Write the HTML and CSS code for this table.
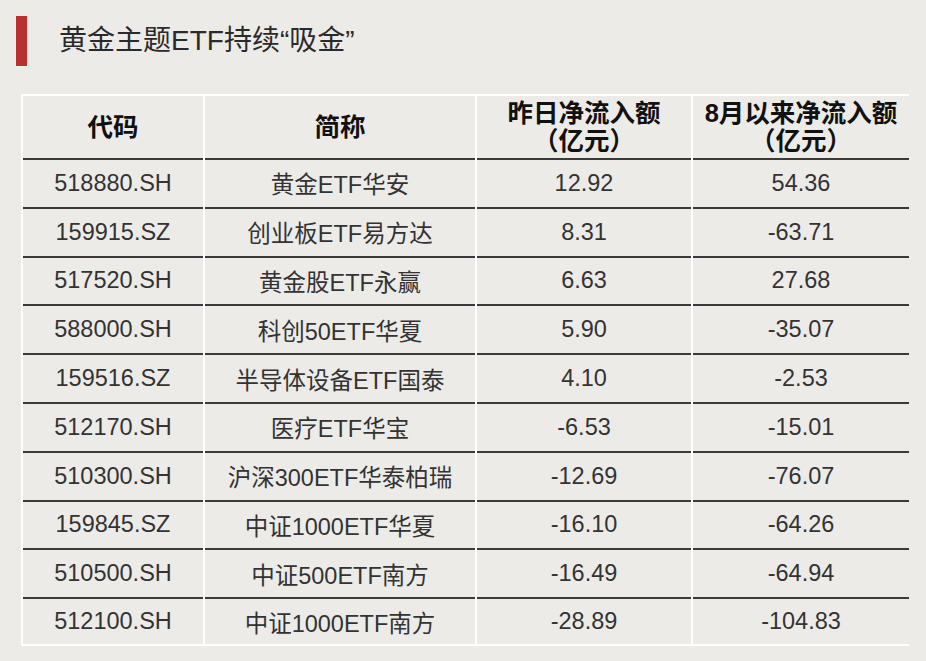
FILE: index.html
```html
<!DOCTYPE html>
<html lang="zh-CN">
<head>
<meta charset="utf-8">
<title>黄金主题ETF持续“吸金”</title>
<link rel="stylesheet" href="styles.css">
</head>
<body>
<div class="page">
  <div class="heading">
    <span class="bar"></span>
    <h1 class="title">黄金主题ETF持续“吸金”</h1>
  </div>
  <div class="table">
    <div class="cell head">代码</div>
    <div class="cell head">简称</div>
    <div class="cell head two">昨日净流入额<br>（亿元）</div>
    <div class="cell head two">8月以来净流入额<br>（亿元）</div>

    <div class="cell">518880.SH</div><div class="cell">黄金ETF华安</div><div class="cell">12.92</div><div class="cell">54.36</div>
    <div class="cell">159915.SZ</div><div class="cell">创业板ETF易方达</div><div class="cell">8.31</div><div class="cell">-63.71</div>
    <div class="cell">517520.SH</div><div class="cell">黄金股ETF永赢</div><div class="cell">6.63</div><div class="cell">27.68</div>
    <div class="cell">588000.SH</div><div class="cell">科创50ETF华夏</div><div class="cell">5.90</div><div class="cell">-35.07</div>
    <div class="cell">159516.SZ</div><div class="cell">半导体设备ETF国泰</div><div class="cell">4.10</div><div class="cell">-2.53</div>
    <div class="cell">512170.SH</div><div class="cell">医疗ETF华宝</div><div class="cell">-6.53</div><div class="cell">-15.01</div>
    <div class="cell">510300.SH</div><div class="cell">沪深300ETF华泰柏瑞</div><div class="cell">-12.69</div><div class="cell">-76.07</div>
    <div class="cell">159845.SZ</div><div class="cell">中证1000ETF华夏</div><div class="cell">-16.10</div><div class="cell">-64.26</div>
    <div class="cell">510500.SH</div><div class="cell">中证500ETF南方</div><div class="cell">-16.49</div><div class="cell">-64.94</div>
    <div class="cell last">512100.SH</div><div class="cell last">中证1000ETF南方</div><div class="cell last">-28.89</div><div class="cell last">-104.83</div>
  </div>
</div>
</body>
</html>
```
FILE: styles.css
```css
html, body {
  margin: 0;
  padding: 0;
  background: #edebe8;
}
.page {
  width: 926px;
  height: 661px;
  background: #edebe8;
  font-family: "Liberation Sans", "Noto Sans CJK SC", sans-serif;
  color: #333;
  overflow: hidden;
}
.heading {
  display: flex;
  align-items: center;
  padding: 16px 0 0 16px;
  gap: 32px;
  height: 50px;
}
.bar {
  width: 11px;
  height: 50px;
  background: #b8302f;
  flex: none;
}
.title {
  margin: 0;
  font-size: 28px;
  font-weight: normal;
  color: #2a2a2a;
  line-height: 50px;
}
.table {
  margin: 28px 0 0 21px;
  width: 888px;
  box-sizing: border-box;
  background: #ffffff;
  padding: 2px;
  display: grid;
  grid-template-columns: 180px 270px 214px 216px;
  column-gap: 2px;
}
.cell {
  background: #edebe8;
  height: 46.8px;
  border-bottom: 2px solid #3a3a3a;
  display: flex;
  align-items: center;
  justify-content: center;
  font-size: 23.5px;
  color: #333;
  text-align: center;
}
.cell.head {
  height: 62px;
  font-weight: bold;
  color: #111;
  font-size: 25.5px;
  line-height: 28px;
}
.cell.last {
  border-bottom: none;
  height: 45px;
}
```
